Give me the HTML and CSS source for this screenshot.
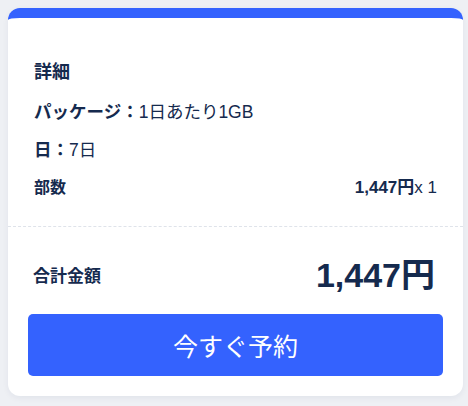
FILE: index.html
```html
<!DOCTYPE html>
<html lang="ja">
<head>
    <meta charset="UTF-8">
    <meta name="viewport" content="width=device-width, initial-scale=1.0">
    <title>予約</title>
    <link rel="stylesheet" href="styles.css">
</head>
<body>
    <div class="card">
        <div class="details">
            <div class="details-title">詳細</div>
            <div class="detail-row"><b>パッケージ：</b>1日あたり1GB</div>
            <div class="detail-row"><b>日：</b>7日</div>
            <div class="qty-row">
                <span class="qty-label">部数</span>
                <span class="qty-value"><b>1,447円</b>x 1</span>
            </div>
        </div>

        <div class="total">
            <div class="total-row">
                <span class="total-label">合計金額</span>
                <span class="total-price">1,447円</span>
            </div>
            <button class="book-btn">今すぐ予約</button>
        </div>
    </div>
</body>
</html>
```

FILE: styles.css
```css
body {
    font-family: "Liberation Sans", "Noto Sans CJK JP", sans-serif;
    margin: 0;
    padding: 8px 5px 8px 8px;
    background-color: #eef0f4;
    color: #152a4e;
}

.card {
    background-color: #fff;
    border-top: 10px solid #3462fe;
    border-radius: 12px;
    box-shadow: 0 2px 6px rgba(20, 40, 80, 0.06);
    overflow: hidden;
}

.details {
    padding: 40px 26px 24px;
    border-bottom: 1px dashed #dfe3ea;
}

.details-title {
    font-size: 18px;
    font-weight: bold;
    line-height: 28px;
    margin-bottom: 12px;
}

.detail-row {
    font-size: 17.5px;
    line-height: 28px;
    margin-bottom: 10px;
}

.qty-row {
    display: flex;
    justify-content: space-between;
    align-items: center;
    font-size: 16px;
    line-height: 28px;
}

.qty-label {
    font-weight: bold;
}

.qty-value {
    font-size: 17px;
}

.total {
    padding: 20px;
}

.total-row {
    display: flex;
    justify-content: space-between;
    align-items: center;
    height: 50px;
    padding: 0 8px 0 5px;
}

.total-label {
    font-size: 17px;
    font-weight: bold;
    padding-top: 4px;
}

.total-price {
    font-size: 34px;
    font-weight: bold;
}

.book-btn {
    display: block;
    width: 100%;
    height: 62px;
    margin-top: 17px;
    background-color: #3462fe;
    color: #fff;
    border: none;
    border-radius: 5px;
    font-family: "Noto Sans CJK JP", sans-serif;
    font-size: 25px;
    cursor: pointer;
}
```
